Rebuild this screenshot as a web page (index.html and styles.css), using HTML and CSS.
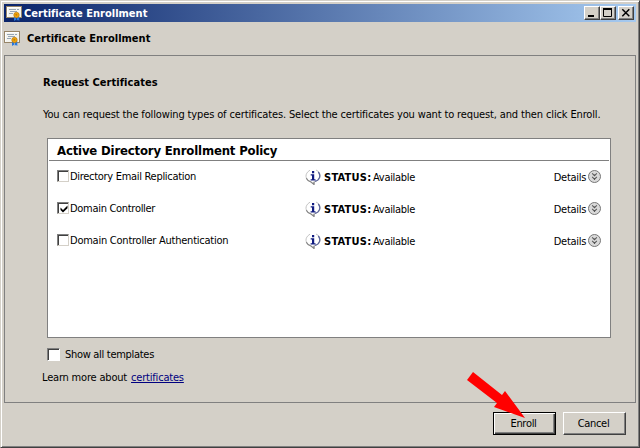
FILE: index.html
```html
<!DOCTYPE html>
<html lang="en">
<head>
<meta charset="utf-8">
<title>Certificate Enrollment</title>
<link rel="stylesheet" href="styles.css">
</head>
<body>
<svg class="defs" aria-hidden="true">
  <symbol id="cert" viewBox="0 0 16 15">
    <rect x=".5" y=".5" width="15" height="11" fill="#f4f4ee" stroke="#978568"/>
    <path d="M1 1.500h14M1.500 1v10" stroke="#fff"/>
    <path d="M3 3.500h7M11 3.500h2M4 5.500h7M3 7.500h4" stroke="#8b9cae" stroke-width=".9"/>
    <path d="M8 10.500v4.500l1.500-1 .9.500V11M11 11v3.500l1-.6 1.300 1V10.500" fill="#2878dc"/>
    <circle cx="10.500" cy="9" r="2.700" fill="#f0a60c" stroke="#bc7808" stroke-width=".7"/>
    <circle cx="10.300" cy="8.800" r="1" fill="#c77e05"/>
  </symbol>
  <symbol id="info" viewBox="0 0 16 16">
    <path d="M5 1.200C-.8 4.500-.2 10.800 6 13l3 2.500v-2.700C17 11.500 17 3.500 11 1" fill="#fff" stroke="#c4c4c4"/>
    <path d="M1.300 9.200C2.500 11.600 4 12.500 6 13l3 2.400v-2.600" fill="none" stroke="#858585" stroke-width="1.200"/>
    <path d="M13.300 3C16.200 6.500 14.500 11.500 10 12.300" fill="none" stroke="#596299" stroke-width="1.200"/>
    <path d="M7 2h2.200v2.200H7zM5.700 5.200h3.500v5h1.300v1.200H5.600v-1.200H7v-3.800H5.700z" fill="#101b80"/>
  </symbol>
  <symbol id="more" viewBox="0 0 13 13">
    <circle cx="6.500" cy="6.500" r="6" fill="#d9d9d9" stroke="#777"/>
    <path d="M4.200 3.300l2.300 2.500 2.300-2.500M4.200 6.800l2.300 2.500 2.300-2.500" fill="none" stroke="#555" stroke-width="1.100"/>
    <path d="M6.500 4.500v1.200M6.500 8v2" stroke="#555"/>
  </symbol>
</svg>
<div class="window">
  <header class="titlebar">
    <svg class="cert"><use href="#cert"/></svg>
    <span class="title t-title">Certificate Enrollment</span>
    <span class="cap"><svg viewBox="0 0 16 14"><path d="M4 10h6" stroke="#000" stroke-width="2"/></svg></span>
    <span class="cap"><svg viewBox="0 0 16 14"><path d="M3.500 3v7.500h8V3" fill="none" stroke="#000"/><path d="M3 3h9" stroke="#000" stroke-width="2"/></svg></span>
    <span class="cap close"><svg viewBox="0 0 16 14"><path d="M4.300 3.300l7 7M11.300 3.300l-7 7" stroke="#000" stroke-width="1.500"/></svg></span>
  </header>
  <div class="subhead"><svg class="cert"><use href="#cert"/></svg><span class="t-title">Certificate Enrollment</span></div>
  <main class="panel">
    <h1 class="t-request">Request Certificates</h1>
    <p class="desc"><span class="t-desc">You can request the following types of certificates. Select the certificates you want to request, and then click Enroll.</span></p>
    <section class="list">
      <h2><span class="t-policy">Active Directory Enrollment Policy</span></h2>
      <div class="row"><span class="check"></span><span class="name">Directory Email Replication</span><svg class="info"><use href="#info"/></svg><b class="t-status">STATUS:</b><span class="available">Available</span><span class="details">Details</span><svg class="more"><use href="#more"/></svg></div>
      <div class="row"><span class="check"><svg viewBox="0 0 8 8"><path d="M.5 2.500L3 5l4.500-4.500v2.700L3 7.500.5 5z"/></svg></span><span class="name">Domain Controller</span><svg class="info"><use href="#info"/></svg><b class="t-status">STATUS:</b><span class="available">Available</span><span class="details">Details</span><svg class="more"><use href="#more"/></svg></div>
      <div class="row"><span class="check"></span><span class="name t-auth">Domain Controller Authentication</span><svg class="info"><use href="#info"/></svg><b class="t-status">STATUS:</b><span class="available">Available</span><span class="details">Details</span><svg class="more"><use href="#more"/></svg></div>
    </section>
    <div class="show"><span class="check"></span><span>Show all templates</span></div>
    <div class="learn"><span>Learn more about</span><a href="#">certificates</a></div>
  </main>
  <footer>
    <button class="default"><span>Enroll</span></button>
    <button><span>Cancel</span></button>
  </footer>
  <svg class="arrow" viewBox="0 0 60 50"><path d="M7 2L36 25 39 21 59 48 28 37 31 33 1 10z" fill="#f00"/></svg>
</div>
</body>
</html>
```
FILE: styles.css
```css
* { box-sizing: border-box; }
body { margin: 0; font: 11px/14px "DejaVu Sans Condensed", "DejaVu Sans", sans-serif; font-stretch: condensed; color: #000; letter-spacing: -.3px; white-space: nowrap; }
h1, h2, p { margin: 0; font-size: inherit; }
svg { display: block; flex: none; }
.defs { position: absolute; width: 0; height: 0; }
.window { position: relative; width: 640px; height: 448px; padding: 3px; background: #d4d0c8; border: 1px solid; border-color: #d4d0c8 #404040 #404040 #d4d0c8; box-shadow: inset 1px 1px #fff, inset -1px -1px #808080; }
.titlebar { display: flex; align-items: center; height: 18px; padding: 0 2px; background: linear-gradient(90deg, #0a246a, #a6caf0); color: #fff; font-weight: bold; }
.cert { width: 16px; height: 15px; }
.title { margin-left: 2px; margin-right: auto; padding-top: 1px; }
.t-title { letter-spacing: .01px; }
.t-request { letter-spacing: .04px; }
.t-desc { letter-spacing: -.137px; }
.t-policy { letter-spacing: -.17px; }
.t-auth { letter-spacing: -.24px; }
.cap { flex: none; width: 16px; height: 14px; background: #d4d0c8; border: 1px solid; border-color: #fff #404040 #404040 #fff; box-shadow: inset -1px -1px #808080; }
.cap svg { width: 16px; height: 14px; margin: -1px; }
.close { margin-left: 2px; }
.subhead { display: flex; align-items: center; gap: 7px; height: 33px; font-weight: bold; }
.panel { width: 632px; height: 348px; border: 1px solid #808080; padding: 20px 24px 0 38px; }
.desc { margin-top: 18px; }
.list { width: 564px; height: 200px; margin: 16px 0 0 4px; padding: 1px; background: #fff; border: 1px solid #808080; }
h2 { height: 21px; padding: 2px 8px; border-bottom: 1px solid #808080; font-size: 13px; line-height: 17px; }
.row { display: flex; align-items: center; height: 32px; padding: 0 8px; }
.check { flex: none; width: 12px; height: 12px; background: #fff; border: 1px solid; border-color: #808080 #d4d0c8 #d4d0c8 #808080; box-shadow: inset 1px 1px #404040; }
.row .check { margin-bottom: 2px; }
.check svg { width: 8px; height: 8px; margin: 2px 0 0 2px; }
.name { width: 235px; margin-left: 1px; }
.info { width: 16px; height: 16px; margin-right: 3px; }
.row b { width: 49px; padding-top: 1px; letter-spacing: .25px; }
.available { padding-top: 1px; }
.details { margin-left: auto; margin-right: 2px; padding-top: 1px; }
.more { width: 13px; height: 13px; margin-bottom: 1px; }
.show { display: flex; align-items: center; gap: 5px; margin: 9px 0 0 4px; }
.show .check { width: 13px; height: 13px; border-right-color: #fff; border-bottom-color: #fff; }
.show span + span { padding-top: 1px; }
.learn { display: flex; gap: 4px; margin-top: 9px; letter-spacing: -.19px; }
.learn span { margin-left: -1px; }
a { color: #000080; }
footer { display: flex; justify-content: flex-end; gap: 7px; padding: 9px 10px 0 0; }
button { width: 63px; height: 23px; padding: 0 2px 0 0; background: #d4d0c8; border: 1px solid; border-color: #fff #404040 #404040 #fff; box-shadow: inset -1px -1px #808080; font: inherit; letter-spacing: inherit; color: #000; }
.default { border-color: #000; box-shadow: inset 1px 1px #fff, inset -1px -1px #404040, inset -2px -2px #808080; }
.arrow { position: absolute; left: 465px; top: 369px; width: 60px; height: 50px; }
```
